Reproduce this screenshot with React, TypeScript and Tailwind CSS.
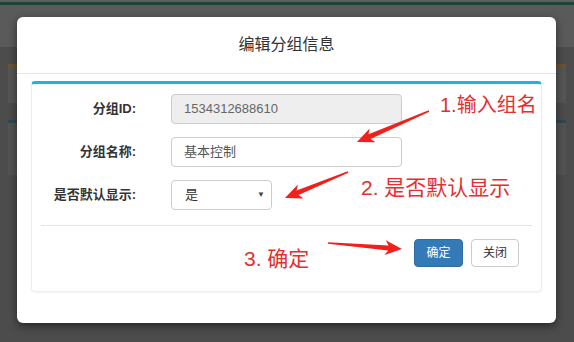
import React from 'react';

const font = { fontFamily: '"Liberation Sans", "Noto Sans CJK SC", sans-serif' };

type Pt = [number, number];

// tapered annotation arrow: thin tail, wide head
function arrowPoints(tail: Pt, tip: Pt, headLen: number, headW: number, tailW: number, neckW: number) {
  const dx = tip[0] - tail[0];
  const dy = tip[1] - tail[1];
  const len = Math.hypot(dx, dy);
  const ux = dx / len;
  const uy = dy / len;
  const nx = -uy;
  const ny = ux;
  const neck: Pt = [tip[0] - ux * headLen, tip[1] - uy * headLen];
  const inner: Pt = [tip[0] - ux * headLen * 0.8, tip[1] - uy * headLen * 0.8];
  const p = (b: Pt, w: number) => `${(b[0] + nx * w).toFixed(1)},${(b[1] + ny * w).toFixed(1)}`;
  return [
    p(tail, tailW / 2),
    p(inner, neckW / 2),
    p(neck, headW / 2),
    `${tip[0]},${tip[1]}`,
    p(neck, -headW / 2),
    p(inner, -neckW / 2),
    p(tail, -tailW / 2),
  ].join(' ');
}

const arrows: { tail: Pt; tip: Pt }[] = [
  { tail: [429, 111], tip: [357, 142] },
  { tail: [348, 172], tip: [285, 198] },
  { tail: [328, 243], tip: [402, 249] },
];

function FormRow({ label, children }: { label: string; children: React.ReactNode }) {
  return (
    <div className="flex items-center h-[30px]">
      <label className="w-[104px] text-right text-[13px] font-bold text-[#333]">{label}</label>
      <div className="ml-[35px]">{children}</div>
    </div>
  );
}

export default function App() {
  return (
    <div className="relative w-[574px] h-[342px] overflow-hidden bg-[#4c4c4c]" style={font}>
      {/* page behind the dialog */}
      <div className="h-[2px] bg-[#5e5e5e]" />
      <div className="h-[3px] bg-[#1d4535]" />
      <div className="h-[42px] bg-[#5a5a5a]" />
      <div className="px-2 pt-[17px]">
        <div className="h-[39px] border-t-4 border-[#6a5431] bg-[#555]" />
        <div className="mt-[17px] h-[55px] border-t-[3px] border-[#2e4854] bg-[#535353]" />
      </div>

      {/* dialog */}
      <div className="absolute left-[17px] top-[17px] w-[539px] h-[306px] bg-white rounded-md shadow-[0_3px_9px_rgba(0,0,0,0.5)]">
        <div className="h-[57px] flex items-center justify-center border-b border-[#e5e5e5] text-[16px] text-[#333]">
          编辑分组信息
        </div>
        <div className="px-[14px] pt-[7px]">
          <div className="h-[211px] rounded border border-[#eee] border-t-[3px] border-t-[#1cb4e3] shadow-[0_1px_2px_rgba(0,0,0,0.05)]">
            <div className="pt-[10px] flex flex-col gap-[13px]">
              <FormRow label="分组ID:">
                <div className="w-[231px] h-[30px] flex items-center px-3 rounded border border-[#ccc] bg-[#eee] text-[13px] text-[#666]">
                  1534312688610
                </div>
              </FormRow>
              <FormRow label="分组名称:">
                <div className="w-[231px] h-[30px] flex items-center px-3 rounded border border-[#ccc] bg-white text-[13px] text-[#555]">
                  基本控制
                </div>
              </FormRow>
              <FormRow label="是否默认显示:">
                <div className="w-[101px] h-[30px] flex items-center justify-between pl-[13px] pr-[6px] rounded border border-[#ccc] bg-white text-[13px] text-[#333]">
                  <span>是</span>
                  <span className="text-[8px] text-[#444]">▼</span>
                </div>
              </FormRow>
            </div>
            <div className="mx-[9px] mt-[15px] border-t border-[#e5e5e5]" />
            <div className="flex justify-end gap-[8px] pt-[13px] pr-[22px]">
              <button className="w-[49px] h-[28px] rounded bg-[#337ab7] border border-[#2e6da4] text-white text-[12px]">
                确定
              </button>
              <button className="w-[48px] h-[28px] rounded bg-white border border-[#ccc] text-[#333] text-[12px]">
                关闭
              </button>
            </div>
          </div>
        </div>
      </div>

      {/* red annotations */}
      <div className="absolute left-[440px] top-[90px] text-[20px] text-[#e3302e]">1.输入组名</div>
      <div className="absolute left-[361px] top-[172px] text-[21px] text-[#e3302e]">2. 是否默认显示</div>
      <div className="absolute left-[244px] top-[243px] text-[21px] text-[#e3302e]">3. 确定</div>
      <svg className="absolute inset-0 pointer-events-none" width="574" height="342">
        {arrows.map((a, i) => (
          <polygon key={i} points={arrowPoints(a.tail, a.tip, 17, 15, 1.5, 5)} fill="#f2201c" />
        ))}
      </svg>
    </div>
  );
}
